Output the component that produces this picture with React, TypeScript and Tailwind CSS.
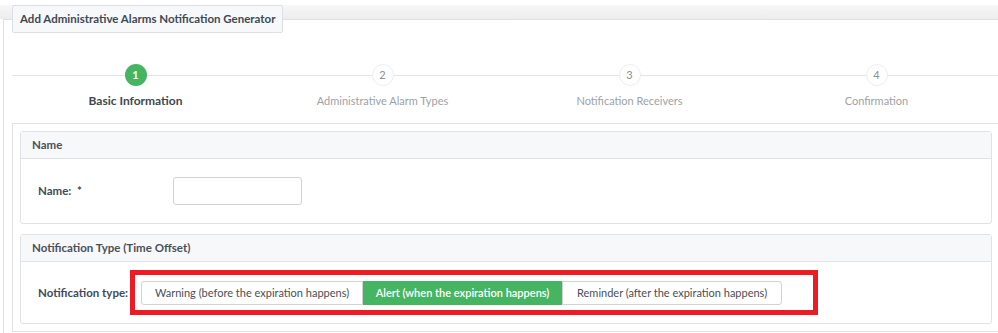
const steps = [
  "Basic Information",
  "Administrative Alarm Types",
  "Notification Receivers",
  "Confirmation",
];

function Stepper() {
  return (
    <div className="grid grid-cols-4">
      {steps.map((label, i) => (
        <div key={label} className="flex flex-col items-center">
          <div className="flex w-full items-center">
            <div className="h-px flex-1 bg-[#e3e5e8]" />
            {i === 0 ? (
              <div className="flex h-[22px] w-[22px] items-center justify-center rounded-full bg-[#45b562] text-[11px] font-bold text-white">
                1
              </div>
            ) : (
              <div className="flex h-[22px] w-[22px] items-center justify-center rounded-full border border-[#eceef0] bg-white text-[11px] text-[#8a8f96]">
                {i + 1}
              </div>
            )}
            <div className="h-px flex-1 bg-[#e3e5e8]" />
          </div>
          <div
            className={
              i === 0
                ? "mt-[7px] text-[12px] leading-[16px] font-bold text-[#41464d]"
                : "mt-[7px] text-[11px] leading-[16px] text-[#9da2a8]"
            }
          >
            {label}
          </div>
        </div>
      ))}
    </div>
  );
}

function Panel({ title, children }: { title: string; children: React.ReactNode }) {
  return (
    <div className="rounded-[3px] border border-[#dfe2e6] bg-white">
      <div className="flex h-[27px] items-center border-b border-[#dfe2e6] bg-[#f7f8fa] pl-[11px] text-[11.5px] font-bold text-[#4a5059]">
        {title}
      </div>
      {children}
    </div>
  );
}

export default function App() {
  return (
    <div className="w-[998px] h-[333px] overflow-hidden bg-white pt-[5px] font-['Lato',sans-serif]">
      <div className="h-[14px] w-[998px] bg-gradient-to-b from-[#f7f7f7] to-[#ededed]" />
      <div className="ml-[3px] w-[1005px] border-l border-t border-[#dcdfe3] pb-[20px]">
        <div className="-mt-[15px] ml-[8px] flex h-[28px] w-fit items-center rounded-[2px] border border-[#dcdfe3] bg-[#f7f8fa] px-[7px] text-[11.5px] font-bold text-[#3f4955]">
          Add Administrative Alarms Notification Generator
        </div>

        <div className="ml-[8px] mr-[8px] mt-[31px]">
          <Stepper />
        </div>

        <div className="ml-[8px] mr-[8px] mt-[14px] flex flex-col gap-[10px] border border-[#dfe2e6] p-[7px]">
          <Panel title="Name">
            <div className="flex h-[64px] items-center pl-[17px]">
              <div className="w-[135px] text-[11.5px] font-bold text-[#3e4a5b]">
                Name: <span className="ml-[3px]">*</span>
              </div>
              <input
                type="text"
                className="h-[28px] w-[129px] rounded-[3px] border border-[#cfd3d8] bg-white outline-none"
              />
            </div>
          </Panel>

          <Panel title="Notification Type (Time Offset)">
            <div className="flex h-[61px] items-center pl-[17px]">
              <div className="mr-[2px] text-[11.5px] font-bold text-[#3e4a5b]">Notification type:</div>
              <div className="border-[5px] border-[#ed1c24] pb-[5px] pl-[6px] pr-[31px] pt-[6px]">
                <div className="flex h-[24px] text-[11px]">
                  <button className="flex w-[222px] items-center justify-center rounded-l-[3px] border border-[#cfd3d8] bg-white text-[#4a4f56]">
                    Warning (before the expiration happens)
                  </button>
                  <button className="flex w-[199px] items-center justify-center border border-[#45b562] bg-[#45b562] font-semibold text-white">
                    Alert (when the expiration happens)
                  </button>
                  <button className="flex w-[220px] items-center justify-center rounded-r-[3px] border border-[#cfd3d8] bg-white text-[#4a4f56]">
                    Reminder (after the expiration happens)
                  </button>
                </div>
              </div>
            </div>
          </Panel>
        </div>
      </div>
    </div>
  );
}
